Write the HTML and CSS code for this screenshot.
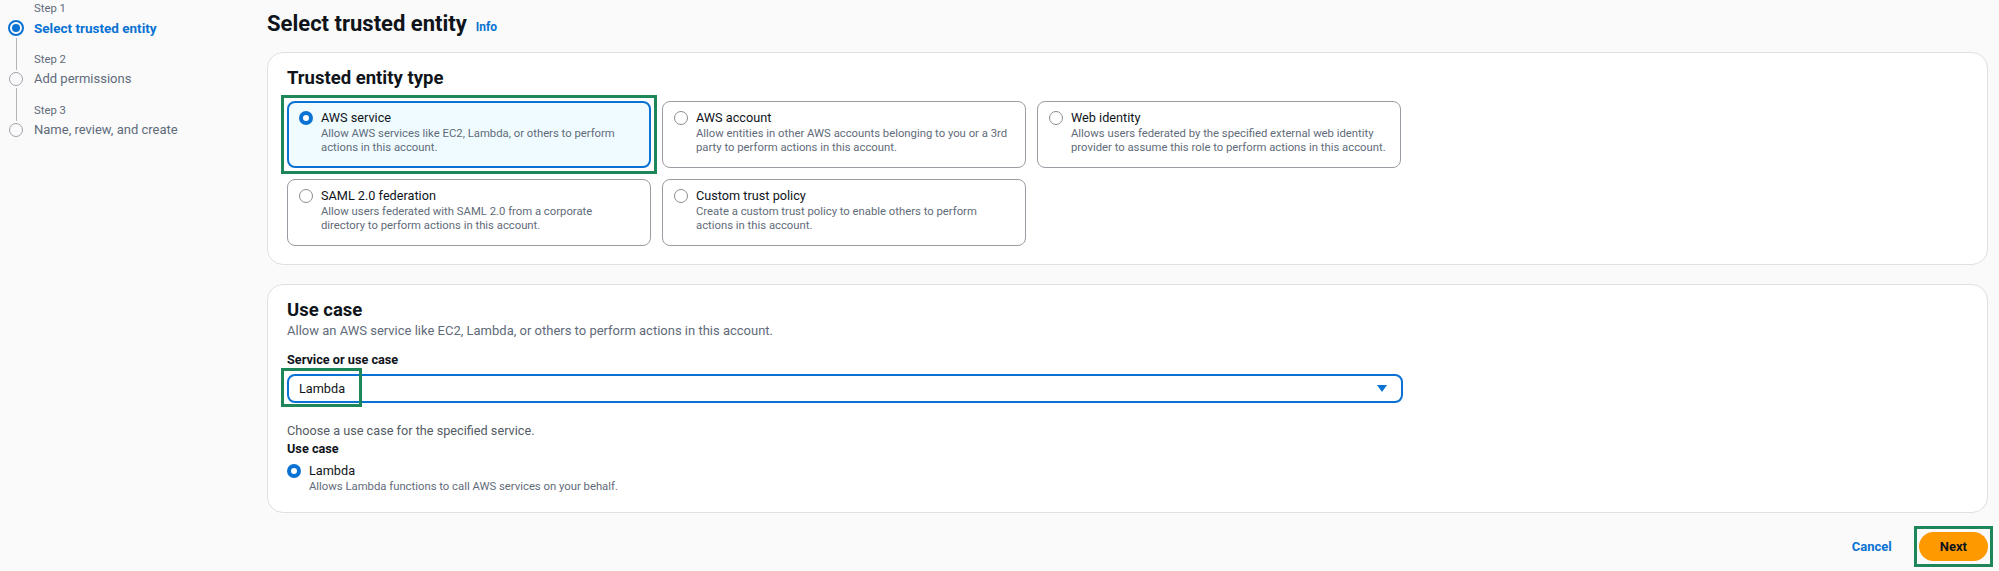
FILE: index.html
```html
<!DOCTYPE html>
<html lang="en">
<head>
<meta charset="utf-8">
<title>Select trusted entity</title>
<link rel="stylesheet" href="styles.css">
</head>
<body>
<nav class="steps">
  <div class="step active">
    <div class="marker"><span class="seg seg-top blank"></span><span class="dot"></span><span class="seg seg-bottom"></span></div>
    <div class="step-text"><div class="step-num">Step 1</div><div class="step-title">Select trusted entity</div></div>
  </div>
  <div class="step">
    <div class="marker"><span class="seg seg-top"></span><span class="dot"></span><span class="seg seg-bottom"></span></div>
    <div class="step-text"><div class="step-num">Step 2</div><div class="step-title">Add permissions</div></div>
  </div>
  <div class="step">
    <div class="marker"><span class="seg seg-top"></span><span class="dot"></span></div>
    <div class="step-text"><div class="step-num">Step 3</div><div class="step-title">Name, review, and create</div></div>
  </div>
</nav>

<main class="content">
  <header class="page-header">
    <h1>Select trusted entity</h1>
    <a class="info" href="#">Info</a>
  </header>

  <section class="panel">
    <h2>Trusted entity type</h2>
    <div class="tiles">
      <div class="tile selected">
        <span class="radio on"></span>
        <div>
          <div class="tile-title">AWS service</div>
          <div class="tile-desc">Allow AWS services like EC2, Lambda, or others to perform<br>actions in this account.</div>
        </div>
      </div>
      <div class="tile">
        <span class="radio"></span>
        <div>
          <div class="tile-title">AWS account</div>
          <div class="tile-desc">Allow entities in other AWS accounts belonging to you or a 3rd<br>party to perform actions in this account.</div>
        </div>
      </div>
      <div class="tile">
        <span class="radio"></span>
        <div>
          <div class="tile-title">Web identity</div>
          <div class="tile-desc">Allows users federated by the specified external web identity<br>provider to assume this role to perform actions in this account.</div>
        </div>
      </div>
      <div class="tile">
        <span class="radio"></span>
        <div>
          <div class="tile-title">SAML 2.0 federation</div>
          <div class="tile-desc">Allow users federated with SAML 2.0 from a corporate<br>directory to perform actions in this account.</div>
        </div>
      </div>
      <div class="tile">
        <span class="radio"></span>
        <div>
          <div class="tile-title">Custom trust policy</div>
          <div class="tile-desc">Create a custom trust policy to enable others to perform<br>actions in this account.</div>
        </div>
      </div>
    </div>
  </section>

  <section class="panel panel-usecase">
    <h2>Use case</h2>
    <p class="panel-desc">Allow an AWS service like EC2, Lambda, or others to perform actions in this account.</p>
    <div class="field-label">Service or use case</div>
    <div class="select">
      <span>Lambda</span>
      <svg class="caret" width="10" height="7" viewBox="0 0 10 7"><path d="M0 0 H10 L5 7 Z" fill="#0972d3"/></svg>
      <span class="mark"></span>
    </div>
    <p class="hint">Choose a use case for the specified service.</p>
    <div class="sub-label">Use case</div>
    <div class="option">
      <span class="radio on"></span>
      <div>
        <div class="tile-title">Lambda</div>
        <div class="tile-desc">Allows Lambda functions to call AWS services on your behalf.</div>
      </div>
    </div>
  </section>

  <div class="actions">
    <a class="link" href="#">Cancel</a>
    <button class="btn-primary" type="button">Next</button>
  </div>
</main>
</body>
</html>
```

FILE: styles.css
```css
* { box-sizing: border-box; }

body {
  margin: 0;
  background: #fafafa;
  font-family: Roboto, "Noto Sans", "Liberation Sans", sans-serif;
  color: #0f141a;
  display: flex;
  min-height: 571px;
}

/* ---------- steps nav ---------- */
.steps {
  width: 267px;
  flex: none;
  padding: 1px 0 0 8px;
}
.step { display: flex; gap: 10px; }
.marker {
  width: 16px;
  flex: none;
  display: flex;
  flex-direction: column;
  align-items: center;
}
.seg { width: 1px; background: #b4b4bb; }
.seg-top { height: 18px; margin-bottom: 2px; flex: none; }
.active .seg-top { height: 17px; }
.seg.blank { background: transparent; }
.seg-bottom { flex: 1; margin-top: 2px; }
.dot {
  flex: none;
  width: 14px;
  height: 14px;
  border-radius: 50%;
  border: 1.5px solid #9ea3ab;
}
.active .dot {
  width: 16px;
  height: 16px;
  border: 2px solid #0972d3;
  padding: 2px;
  background: #0972d3;
  background-clip: content-box;
}
.step-text { padding-bottom: 15px; }
.step:last-child .step-text { padding-bottom: 0; }
.step-num { font-size: 11.3px; line-height: 16px; color: #5f6b7a; }
.step-title { margin-top: 2px; font-size: 13px; line-height: 18px; color: #5f6b7a; }
.active .step-title { color: #0972d3; font-weight: 700; font-size: 13.5px; }

/* ---------- main ---------- */
.content { flex: 1; min-width: 0; padding: 10px 11px 0 0; }
.page-header { display: flex; align-items: baseline; gap: 9px; margin-bottom: 14px; }
h1 { margin: 0; font-size: 22px; line-height: 28px; font-weight: 700; }
.info { font-size: 12px; font-weight: 700; color: #0972d3; text-decoration: none; }

.panel {
  background: #fff;
  border: 1px solid #e0e0e4;
  border-radius: 16px;
  padding: 14px 19px 18px;
}
.panel + .panel { margin-top: 19px; }
h2 { margin: 0; font-size: 18.5px; line-height: 22px; font-weight: 700; }

.tiles {
  display: grid;
  grid-template-columns: repeat(3, 364px);
  gap: 11px;
  margin-top: 12px;
}
.tile {
  display: flex;
  gap: 8px;
  border: 1px solid #9b9ba3;
  border-radius: 8px;
  padding: 7px 11px 12px;
  background: #fff;
}
.tile.selected {
  position: relative;
  border: 2px solid #0972d3;
  padding: 6px 10px 11px;
  background: #f0fbff;
}
.tile.selected::after {
  content: "";
  position: absolute;
  inset: -8px;
  border: 3px solid #1e875a;
}
.radio {
  flex: none;
  width: 14px;
  height: 14px;
  margin-top: 2px;
  border-radius: 50%;
  border: 1px solid #8c8c94;
  background: #fff;
}
.radio.on { border: 4px solid #0972d3; }
.tile-title { font-size: 12.7px; line-height: 18px; }
.tile-desc { font-size: 11.3px; line-height: 14px; color: #5f6b7a; white-space: nowrap; }

.panel-desc { margin: 2px 0 0; font-size: 13px; line-height: 16px; color: #5f6b7a; }
.field-label { margin: 13px 0 6px; font-size: 12.7px; line-height: 16px; font-weight: 700; }
.select {
  position: relative;
  width: 1116px;
  height: 29px;
  border: 2px solid #0972d3;
  border-radius: 8px;
  background: #fff;
  display: flex;
  align-items: center;
  justify-content: space-between;
  padding: 0 14px 0 10px;
  font-size: 12.7px;
}
.caret { display: block; }
.mark {
  position: absolute;
  left: -8px;
  top: -8px;
  width: 81px;
  height: 39px;
  border: 3px solid #1e875a;
}
.hint { margin: 20px 0 0; font-size: 12.7px; line-height: 16px; color: #545b64; }
.sub-label { margin-top: 2px; font-size: 12.7px; line-height: 16px; font-weight: 700; }
.option { display: flex; gap: 8px; margin-top: 5px; }

.actions {
  display: flex;
  justify-content: flex-end;
  align-items: center;
  gap: 27px;
  margin-top: 19px;
}
.link { font-size: 13px; font-weight: 700; color: #0972d3; text-decoration: none; }
.btn-primary {
  position: relative;
  height: 29px;
  padding: 0 21px;
  border: 0;
  border-radius: 16px;
  background: #ff9900;
  color: #0f141a;
  font-family: inherit;
  font-size: 13px;
  font-weight: 700;
}
.btn-primary::after {
  content: "";
  position: absolute;
  inset: -6px -5px;
  border: 3px solid #1e875a;
}
```
